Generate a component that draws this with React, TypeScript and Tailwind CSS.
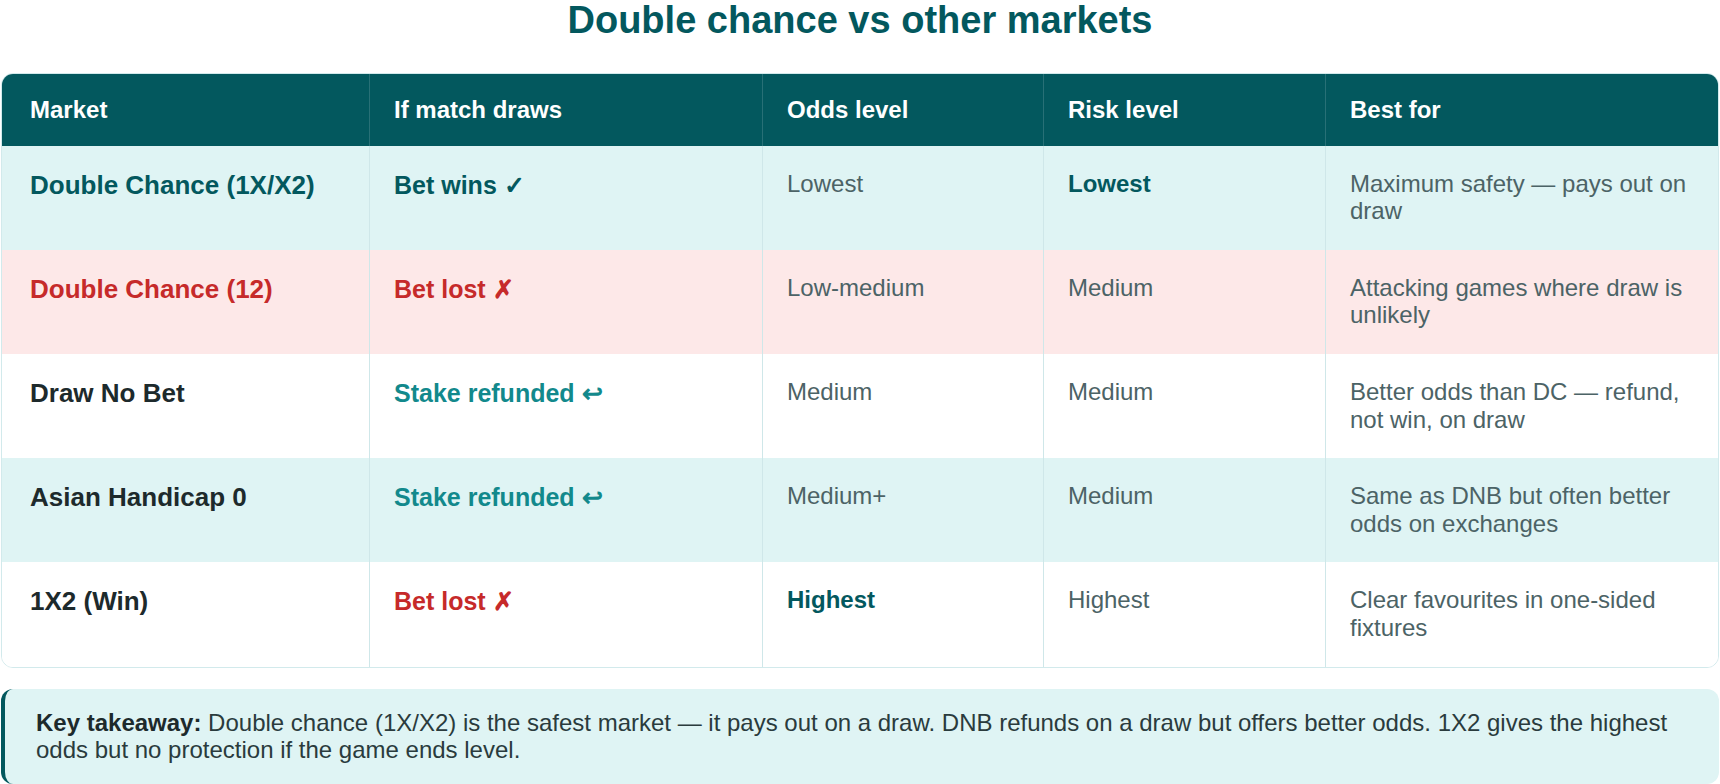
import React from "react";

type Tone = "teal" | "red" | "dark" | "refund" | "muted";

type Row = {
  bg: string;
  market: { text: string; tone: Tone };
  draw: { text: string; tone: Tone };
  odds: { text: string; bold?: boolean };
  risk: { text: string; bold?: boolean };
  best: string;
};

const rows: Row[] = [
  {
    bg: "bg-[#dff4f4]",
    market: { text: "Double Chance (1X/X2)", tone: "teal" },
    draw: { text: "Bet wins ✓", tone: "teal" },
    odds: { text: "Lowest" },
    risk: { text: "Lowest", bold: true },
    best: "Maximum safety — pays out on draw",
  },
  {
    bg: "bg-[#fde8e8]",
    market: { text: "Double Chance (12)", tone: "red" },
    draw: { text: "Bet lost ✗", tone: "red" },
    odds: { text: "Low-medium" },
    risk: { text: "Medium" },
    best: "Attacking games where draw is unlikely",
  },
  {
    bg: "bg-white",
    market: { text: "Draw No Bet", tone: "dark" },
    draw: { text: "Stake refunded ↩", tone: "refund" },
    odds: { text: "Medium" },
    risk: { text: "Medium" },
    best: "Better odds than DC — refund, not win, on draw",
  },
  {
    bg: "bg-[#dff4f4]",
    market: { text: "Asian Handicap 0", tone: "dark" },
    draw: { text: "Stake refunded ↩", tone: "refund" },
    odds: { text: "Medium+" },
    risk: { text: "Medium" },
    best: "Same as DNB but often better odds on exchanges",
  },
  {
    bg: "bg-white",
    market: { text: "1X2 (Win)", tone: "dark" },
    draw: { text: "Bet lost ✗", tone: "red" },
    odds: { text: "Highest", bold: true },
    risk: { text: "Highest" },
    best: "Clear favourites in one-sided fixtures",
  },
];

const toneClass: Record<Tone, string> = {
  teal: "text-[#03585e]",
  red: "text-[#c62a2a]",
  dark: "text-[#1d2a2c]",
  refund: "text-[#12898c]",
  muted: "text-[#4c6366]",
};

const headers = ["Market", "If match draws", "Odds level", "Risk level", "Best for"];

export default function App() {
  return (
    <div className="min-h-screen bg-white px-px font-['Liberation_Sans',Arial,sans-serif] leading-[1.15]">
      {/* Title */}
      <h1 className="mb-[32px] text-center text-[38px] font-bold leading-[41px] text-[#03585e]">
        Double chance vs other markets
      </h1>

      {/* Comparison table */}
      <div className="overflow-hidden rounded-[12px] border border-[#d2eaec]">
        <div className="grid grid-cols-[367px_393px_281px_282px_1fr] bg-[#03585e] text-[24px] font-bold text-white">
          {headers.map((h, i) => (
            <div
              key={h}
              className={`py-[22px] ${i === 0 ? "pl-[28px] pr-6" : "border-l border-white/15 px-6"}`}
            >
              {h}
            </div>
          ))}
        </div>

        {rows.map((r, idx) => (
          <div key={idx} className={`grid grid-cols-[367px_393px_281px_282px_1fr] ${r.bg}`}>
            <div className={`pl-[28px] pr-6 pt-[25px] pb-[22px] text-[26px] font-bold ${toneClass[r.market.tone]}`}>
              {r.market.text}
            </div>
            <div className={`border-l border-[#cfe7e9] px-6 pt-[25px] pb-[24px] text-[25px] font-bold ${toneClass[r.draw.tone]}`}>
              {r.draw.text}
            </div>
            <div
              className={`border-l border-[#cfe7e9] px-6 pt-[24px] pb-[25px] text-[24px] ${
                r.odds.bold ? "font-bold text-[#03585e]" : "text-[#4c6366]"
              }`}
            >
              {r.odds.text}
            </div>
            <div
              className={`border-l border-[#cfe7e9] px-6 pt-[24px] pb-[25px] text-[24px] ${
                r.risk.bold ? "font-bold text-[#03585e]" : "text-[#4c6366]"
              }`}
            >
              {r.risk.text}
            </div>
            <div className="border-l border-[#cfe7e9] px-6 pt-[24px] pb-[25px] text-[24px] text-[#4c6366]">
              {r.best}
            </div>
          </div>
        ))}
      </div>

      {/* Key takeaway */}
      <div className="mt-[21px] rounded-[12px] border-l-4 border-[#03585e] bg-[#dff4f4] py-5 pl-[31px] pr-[30px] text-[24px] text-[#2a3b3d]">
        <p>
          <strong className="font-bold text-[#1d2a2c]">Key takeaway:</strong> Double chance (1X/X2) is the safest
          market — it pays out on a draw. DNB refunds on a draw but offers better odds. 1X2 gives the highest odds but
          no protection if the game ends level.
        </p>
      </div>
    </div>
  );
}
